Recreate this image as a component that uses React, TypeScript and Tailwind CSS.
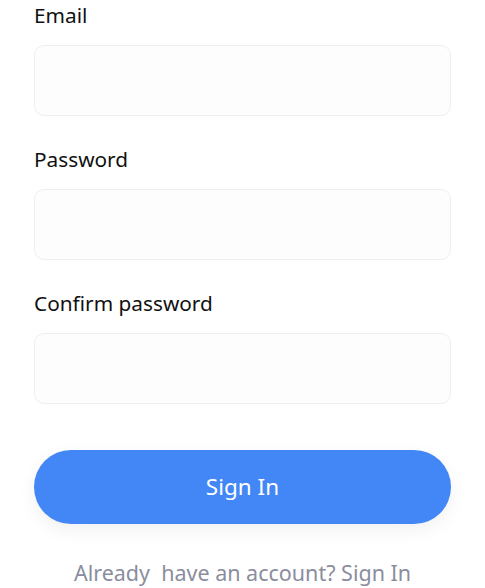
export default function App() {
  const fields = [
    { key: "email", label: "Email", type: "email" },
    { key: "password", label: "Password", type: "password" },
    { key: "confirm", label: "Confirm password", type: "password" },
  ];

  return (
    <div className="min-h-screen bg-white px-[34px] font-['Noto_Sans',sans-serif]">
      <form className="flex flex-col" onSubmit={e => e.preventDefault()}>
        {fields.map((f, i) => (
          <div key={f.key} className={i === 0 ? "" : "mt-[28px]"}>
            <label className="block text-[20.8px] leading-[30px] text-[#111]">{f.label}</label>
            <input
              type={f.type}
              className="mt-[15px] block h-[71px] w-full rounded-[10px] border border-[#efefef] bg-[#fdfdfd] px-4 text-[18px] outline-none"
            />
          </div>
        ))}

        <button
          type="submit"
          className="mt-[46px] h-[74px] w-full rounded-full bg-[#4287f5] text-[22.5px] text-white shadow-[0_6px_18px_rgba(0,0,0,0.06)]"
        >
          Sign In
        </button>

        <p className="mt-[34px] whitespace-pre text-center text-[21.5px] leading-[30px] text-[#8b8d9e]">
          Already  have an account? Sign In
        </p>
      </form>
    </div>
  );
}
